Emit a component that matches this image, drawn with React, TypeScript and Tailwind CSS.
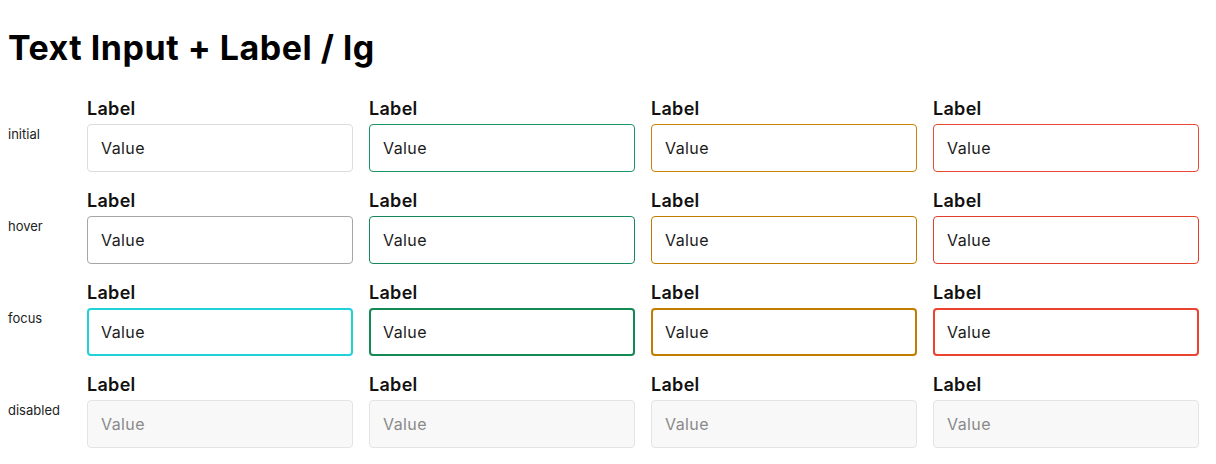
import React from 'react';

type Tone = 'neutral' | 'success' | 'warning' | 'error';

const tones: Tone[] = ['neutral', 'success', 'warning', 'error'];

const stateRows = ['initial', 'hover', 'focus', 'disabled'] as const;
type State = (typeof stateRows)[number];

// border + background per state and tone
const boxClass: Record<State, Record<Tone, string>> = {
  initial: {
    neutral: 'border border-[#dcdcdc] bg-white',
    success: 'border border-[#1b9463] bg-white',
    warning: 'border border-[#c98304] bg-white',
    error: 'border border-[#ea4a35] bg-white',
  },
  hover: {
    neutral: 'border border-[#a6a6a6] bg-white',
    success: 'border border-[#15875a] bg-white',
    warning: 'border border-[#c07c00] bg-white',
    error: 'border border-[#e0402b] bg-white',
  },
  focus: {
    neutral: 'border-2 border-[#1fd2d8] bg-white',
    success: 'border-2 border-[#138a55] bg-white',
    warning: 'border-2 border-[#c27d00] bg-white',
    error: 'border-2 border-[#ec4331] bg-white',
  },
  disabled: {
    neutral: 'border border-[#e4e4e4] bg-[#f8f8f8]',
    success: 'border border-[#e4e4e4] bg-[#f8f8f8]',
    warning: 'border border-[#e4e4e4] bg-[#f8f8f8]',
    error: 'border border-[#e4e4e4] bg-[#f8f8f8]',
  },
};

const Field = ({ state, tone }: { state: State; tone: Tone }) => {
  const isFocus = state === 'focus';
  const isDisabled = state === 'disabled';
  return (
    <div className="flex flex-col">
      <div className="h-6 text-[18px] font-semibold leading-6 tracking-[0.3px] text-[#111]">Label</div>
      <div
        className={`mt-[3px] flex h-12 items-center rounded-[4px] ${boxClass[state][tone]} ${
          isFocus ? 'px-3' : 'px-[13px]'
        }`}
      >
        <span
          className={`text-[16px] tracking-[0.4px] ${isDisabled ? 'text-[#8a8a8a]' : 'text-[#1a1a1a]'}`}
        >
          Value
        </span>
      </div>
    </div>
  );
};

export default function App() {
  return (
    <div className="min-h-screen bg-white px-2 pt-7 font-['Inter','Open_Sans',sans-serif]">
      <h1 className="text-[34px] font-bold leading-10 tracking-[0.5px] text-black">Text Input + Label / lg</h1>
      <div className="mt-[29px] grid grid-cols-[63px_repeat(4,266px)] gap-x-4 gap-y-[17px]">
        {stateRows.map((state) => (
          <React.Fragment key={state}>
            <div className="flex items-center text-[13px] text-[#222]">{state}</div>
            {tones.map((tone) => (
              <Field key={tone} state={state} tone={tone} />
            ))}
          </React.Fragment>
        ))}
      </div>
    </div>
  );
}
